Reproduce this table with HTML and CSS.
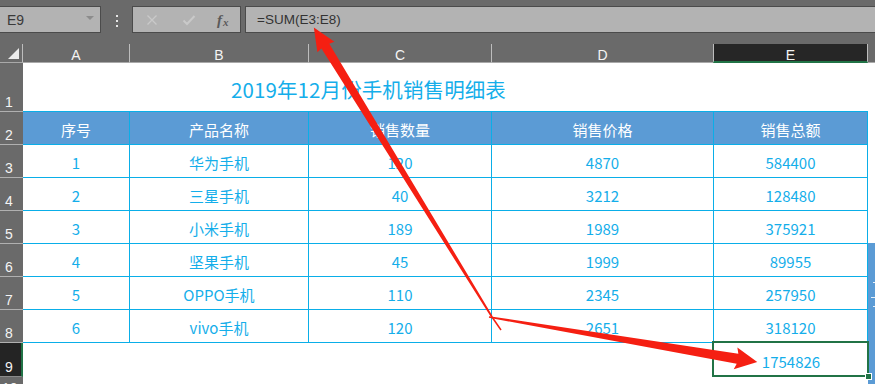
FILE: index.html
```html
<!DOCTYPE html>
<html>
<head>
<meta charset="utf-8">
<link rel="stylesheet" href="styles.css">
</head>
<body>
<div class="app">
  <div class="toolbar">
    <div class="namebox"><span class="cellref">E9</span><span class="dd"></span></div>
    <div class="dots"><i></i><i></i><i></i></div>
    <div class="btns">
      <svg class="ico" width="12" height="12" viewBox="0 0 12 12"><path d="M1.5 1.5L10.5 10.5M10.5 1.5L1.5 10.5" stroke="#c9c9c9" stroke-width="1.4" fill="none"/></svg>
      <svg class="ico" width="14" height="12" viewBox="0 0 14 12"><path d="M1.5 6.5L5 10L12.5 2" stroke="#c9c9c9" stroke-width="2" fill="none"/></svg>
      <span class="fx"><span class="fx-f">f</span><span class="fx-x">x</span></span>
    </div>
    <div class="fbar">=SUM(E3:E8)</div>
  </div>

  <div class="sheet">
    <div class="corner"><svg width="12" height="11" viewBox="0 0 12 11"><path d="M0 11H11V0Z" fill="#ececec"/></svg></div>
    <div class="ch">A</div>
    <div class="ch">B</div>
    <div class="ch">C</div>
    <div class="ch">D</div>
    <div class="ch sel">E</div>
    <div class="ch rest"></div>

    <div class="rh">1</div>
    <div class="title">2019年12月份手机销售明细表</div>
    <div class="blank under"></div>
    <div class="blank"></div>

    <div class="rh">2</div>
    <div class="th">序号</div><div class="th">产品名称</div><div class="th">销售数量</div><div class="th">销售价格</div><div class="th">销售总额</div>
    <div class="blank"></div>

    <div class="rh">3</div>
    <div class="td">1</div><div class="td">华为手机</div><div class="td">120</div><div class="td">4870</div><div class="td">584400</div>
    <div class="blank"></div>

    <div class="rh">4</div>
    <div class="td">2</div><div class="td">三星手机</div><div class="td">40</div><div class="td">3212</div><div class="td">128480</div>
    <div class="blank"></div>

    <div class="rh">5</div>
    <div class="td">3</div><div class="td">小米手机</div><div class="td">189</div><div class="td">1989</div><div class="td">375921</div>
    <div class="blank"></div>

    <div class="rh">6</div>
    <div class="td">4</div><div class="td">坚果手机</div><div class="td">45</div><div class="td">1999</div><div class="td">89955</div>
    <div class="blank"></div>

    <div class="rh">7</div>
    <div class="td">5</div><div class="td">OPPO手机</div><div class="td">110</div><div class="td">2345</div><div class="td">257950</div>
    <div class="blank"></div>

    <div class="rh">8</div>
    <div class="td">6</div><div class="td">vivo手机</div><div class="td">120</div><div class="td">2651</div><div class="td">318120</div>
    <div class="blank"></div>

    <div class="rh rsel">9</div>
    <div class="blank span4"></div>
    <div class="td total">1754826</div>
    <div class="blank"></div>

    <div class="rh r10">10</div>
    <div class="blank span6"></div>
  </div>

  <div class="side-panel"><i></i><i></i><i></i></div>
  <div class="selection"><span class="handle"></span></div>

  <svg class="arrows" width="875" height="384" viewBox="0 0 875 384">
    <line x1="492" y1="317" x2="501" y2="330" stroke="#f51f12" stroke-width="1.5"/>
    <polygon transform="translate(492 317) rotate(238.4)" points="0,-0.9 318,-4.6 317,-10 340,0 317,10 318,4.6 0,0.9" fill="#f51f12"/>
    <polygon transform="translate(489 317) rotate(9.53)" points="0,-0.8 252,-5 250,-11 272,0 250,11 252,5 0,0.8" fill="#f51f12"/>
  </svg>
</div>
</body>
</html>
```

FILE: styles.css
```css
* { box-sizing: border-box; }
html, body { margin: 0; padding: 0; }
body {
  width: 875px;
  height: 384px;
  overflow: hidden;
  background: #6a6a6a;
  font-family: "Noto Sans CJK SC", "Liberation Sans", sans-serif;
}
.app {
  position: relative;
  width: 875px;
  height: 384px;
  overflow: hidden;
}

/* ---------- formula toolbar ---------- */
.toolbar {
  height: 44px;
  display: flex;
  align-items: flex-start;
  padding-top: 6px;
  background: #6a6a6a;
}
.namebox {
  width: 101px;
  height: 27px;
  background: #b3b3b3;
  border: 1px solid #4b4b4b;
  border-left: none;
  display: flex;
  align-items: center;
  padding-left: 7px;
}
.cellref {
  font-family: "Liberation Sans", sans-serif;
  font-size: 14px;
  color: #3a3a3a;
}
.dd {
  margin-left: auto;
  margin-right: 6px;
  width: 0;
  height: 0;
  border-left: 4px solid transparent;
  border-right: 4px solid transparent;
  border-top: 4px solid #8c8c8c;
  margin-top: -3px;
}
.dots {
  width: 31px;
  height: 27px;
  display: flex;
  flex-direction: column;
  align-items: center;
  gap: 3px;
  padding-top: 9px;
}
.dots i {
  display: block;
  width: 2px;
  height: 2px;
  background: #e6e6e6;
}
.btns {
  width: 109px;
  height: 27px;
  background: #b3b3b3;
  border: 1px solid #4b4b4b;
  display: flex;
  align-items: center;
  padding-left: 13px;
}
.btns .ico:first-child { margin-right: 24px; }
.btns .ico:nth-child(2) { margin-right: 21px; }
.fx {
  font-family: "Liberation Serif", serif;
  font-style: italic;
  color: #5a5a5a;
  display: flex;
  align-items: flex-end;
  margin-top: 2px;
}
.fx-f { font-size: 15px; font-weight: bold; }
.fx-x { font-size: 11px; font-weight: bold; margin-left: 1px; margin-bottom: 1px; }
.fbar {
  flex: 1;
  margin-left: 4px;
  margin-right: -3px;
  height: 27px;
  background: #b3b3b3;
  border: 1px solid #4b4b4b;
  padding-left: 11px;
  font-family: "Liberation Sans", sans-serif;
  font-size: 13.5px;
  line-height: 25px;
  color: #333;
}

/* ---------- sheet grid ---------- */
.sheet {
  display: grid;
  grid-template-columns: 23px 107px 179px 183px 222px 154px 1fr;
  grid-template-rows: 19px 49px repeat(7, 33px) 34px 40px;
  background: #fff;
}
.corner {
  background: #6a6a6a;
  border-right: 1px solid #bdbdbd;
  border-bottom: 1px solid #a9a9a9;
  display: flex;
  align-items: flex-end;
  justify-content: flex-end;
  padding: 0 2px 3px 0;
}
.ch {
  background: #6a6a6a;
  border-right: 1px solid #bdbdbd;
  border-bottom: 1px solid #a9a9a9;
  color: #f4f4f4;
  font-family: "Liberation Sans", sans-serif;
  font-size: 14px;
  line-height: 18px;
  padding-top: 2px;
  text-align: center;
}
.ch.sel {
  background: #262626;
  border-left: 1px solid #bdbdbd;
  margin-left: -1px;
  border-bottom: 2px solid #217346;
}
.ch.rest { border-right: none; }

.rh {
  background: #6a6a6a;
  border-bottom: 1px solid #b0b0b0;
  color: #f4f4f4;
  font-family: "Liberation Sans", sans-serif;
  font-size: 14px;
  line-height: 16px;
  display: flex;
  align-items: flex-end;
  padding-left: 5px;
  padding-bottom: 1px;
}
.rh.rsel {
  background: #242424;
  border-right: 2px solid #217346;
  border-bottom-color: #8a8a8a;
}
.rh.r10 {
  align-items: flex-start;
  padding-top: 3px;
  padding-left: 2px;
}

.title {
  grid-column: span 4;
  border-bottom: 1px solid #0aaee8;
  color: #14aeea;
  font-size: 20.5px;
  text-align: center;
  line-height: 49px;
  padding-top: 2px;
  letter-spacing: 0.1px;
}
.blank { background: #fff; }
.blank.under { border-bottom: 1px solid #0aaee8; }
.span4 { grid-column: span 4; }
.span6 { grid-column: span 6; }

.th, .td {
  border-right: 1px solid #0aaee8;
  border-bottom: 1px solid #0aaee8;
  font-size: 15px;
  text-align: center;
  line-height: 33px;
  padding-top: 1px;
}
.th {
  background: #5b9bd5;
  color: #fff;
}
.td {
  background: #fff;
  color: #14aeea;
}
.td.total {
  border: none;
  padding-top: 2px;
}

/* ---------- overlays ---------- */
.side-panel {
  position: absolute;
  left: 868px;
  top: 243px;
  width: 8px;
  height: 141px;
  background: #5b9bd5;
}
.side-panel i {
  position: absolute;
  left: 5px;
  width: 3px;
  height: 1px;
  background: #e8f0f8;
}
.side-panel i:nth-child(1) { top: 39px; }
.side-panel i:nth-child(2) { top: 54px; left: 3px; width: 5px; }
.side-panel i:nth-child(3) { top: 63px; }

.selection {
  position: absolute;
  left: 712px;
  top: 341px;
  width: 157px;
  height: 36px;
  border: 2px solid #217346;
}
.handle {
  position: absolute;
  right: -5px;
  bottom: -5px;
  width: 7px;
  height: 7px;
  background: #217346;
  border: 1px solid #fff;
}
.arrows {
  position: absolute;
  left: 0;
  top: 0;
  pointer-events: none;
}
```
